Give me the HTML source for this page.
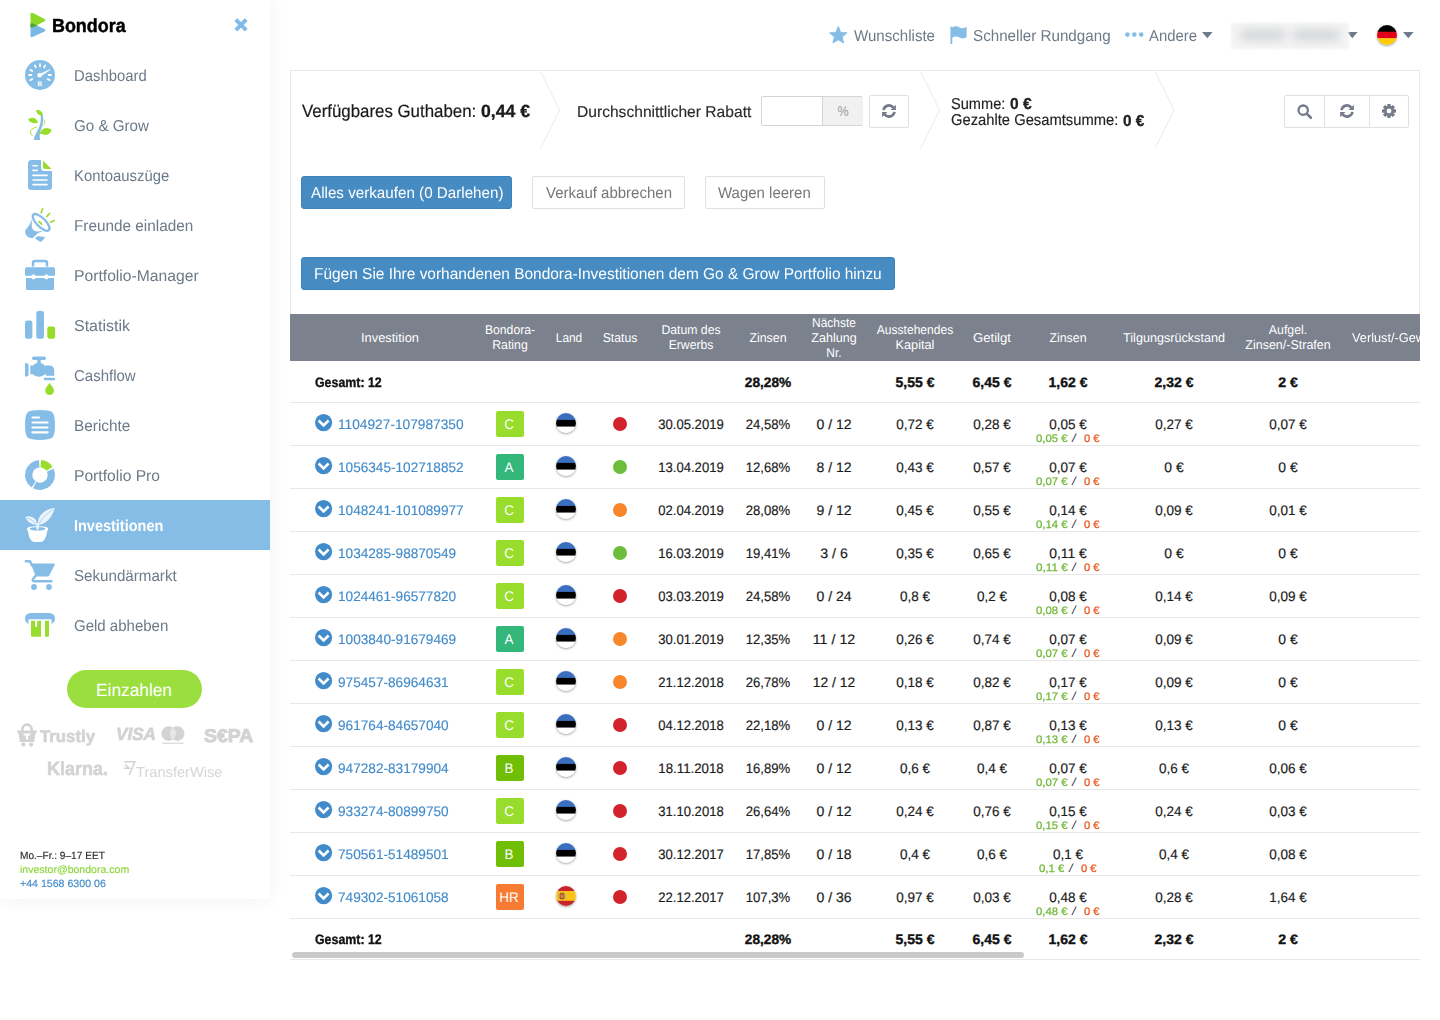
<!DOCTYPE html>
<html lang="de"><head><meta charset="utf-8"><title>Bondora – Investitionen</title>
<style>
html,body{margin:0;padding:0;background:#fff}
body{width:1440px;height:1020px;position:relative;overflow:hidden;font-family:"Liberation Sans",sans-serif;text-rendering:geometricPrecision}
.a{position:absolute;display:block}
.t{position:absolute;white-space:pre;display:block}
svg{overflow:visible}
</style></head>
<body>
<div class="a" style="left:0;top:0;width:270px;height:899px;background:#fff;box-shadow:0 0 18px rgba(0,0,0,0.06)"></div>
<div class="a" style="left:0;top:500px;width:270px;height:50px;background:#85bde7"></div>
<svg class="a" style="left:29.5px;top:12px;" width="17" height="26" viewBox="0 0 17 26"><path d="M1.8 2 V14.3 L14 8.1 Z" fill="#8bd827" stroke="#8bd827" stroke-width="2.6" stroke-linejoin="round"/><path d="M1.8 12.6 V23.9 L14 18.2 Z" fill="#7ab8e6" stroke="#7ab8e6" stroke-width="2.6" stroke-linejoin="round"/><path d="M0.5 12.6 Q0.7 11.1 2.4 11.4 L7.6 13.6 L2.6 15.5 Q0.5 16.2 0.5 14.3 Z" fill="#4ea830"/></svg>
<svg class="a" style="left:234px;top:18px;" width="14" height="14" viewBox="0 0 14 14"><path d="M1.8 1.7 L12.2 12.1 M12.2 1.7 L1.8 12.1" stroke="#7ebaea" stroke-width="3.8"/></svg>
<svg class="a" style="left:25px;top:60px;" width="30" height="30" viewBox="0 0 30 30"><circle cx="15" cy="15" r="15" fill="#85bde7"/><line x1="7.32" y1="19.08" x2="5.38" y2="20.12" stroke="#fff" stroke-width="1.8" stroke-linecap="round"/><line x1="6.30" y1="15.00" x2="4.10" y2="15.00" stroke="#fff" stroke-width="1.8" stroke-linecap="round"/><line x1="7.32" y1="10.92" x2="5.38" y2="9.88" stroke="#fff" stroke-width="1.8" stroke-linecap="round"/><line x1="10.92" y1="7.32" x2="9.88" y2="5.38" stroke="#fff" stroke-width="1.8" stroke-linecap="round"/><line x1="15.00" y1="6.30" x2="15.00" y2="4.10" stroke="#fff" stroke-width="1.8" stroke-linecap="round"/><line x1="19.08" y1="7.32" x2="20.12" y2="5.38" stroke="#fff" stroke-width="1.8" stroke-linecap="round"/><line x1="23.70" y1="15.00" x2="25.90" y2="15.00" stroke="#fff" stroke-width="1.8" stroke-linecap="round"/><line x1="22.68" y1="19.08" x2="24.62" y2="20.12" stroke="#fff" stroke-width="1.8" stroke-linecap="round"/><circle cx="14.6" cy="15.2" r="2.2" fill="#fff"/><path d="M14.2 14.2 L24.8 9.2 L25.2 10 L15.4 16.4 Z" fill="#fff"/><text x="14.8" y="26.2" font-size="6.5" font-weight="700" fill="#fff" text-anchor="middle" font-family="Liberation Sans">B</text></svg>
<svg class="a" style="left:25px;top:109.8px;" width="30" height="30" viewBox="0 0 30 30"><path d="M8.8 30 C9.6 24 14 20 15.4 13 C16 10 16 7 15.4 4.2 L17.4 3.6 C18.6 8 18.4 12 17.2 16 C15.6 21 14 24 15.2 30 Z" fill="#85bde7"/><path d="M11 0.2 C14.5 -0.3 17.5 1.5 17.8 5 C14.5 6 11.8 4 11 0.2 Z" fill="#98dd2c"/><path d="M3 9.5 C7 6.5 11.5 7.5 13 12.8 C9 14 5.5 13 3 9.5 Z" fill="#98dd2c"/><path d="M26.8 20 C23 16.5 17.5 17.5 15.5 22 L13.5 24 C17 23 19 25.5 22 24.8 C24.5 24 26 22 26.8 20 Z" fill="#98dd2c"/><path d="M7.5 26 C3.5 22 6 18.5 11.5 17" fill="none" stroke="#98dd2c" stroke-width="0.9"/><path d="M18.5 9.5 C21 11.5 20 14 17.5 15.5" fill="none" stroke="#98dd2c" stroke-width="0.9"/></svg>
<svg class="a" style="left:28px;top:159.8px;" width="24" height="30" viewBox="0 0 24 30"><path d="M3.5 0 H13 V7.5 Q13 11 16.5 11 H24 V26.5 Q24 30 20.5 30 H3.5 Q0 30 0 26.5 V3.5 Q0 0 3.5 0 Z" fill="#85bde7"/><path d="M15 0.8 L23.5 9 H17.5 Q15 9 15 6.5 Z" fill="#98dd2c"/><g stroke="#fff" stroke-width="1.6" stroke-linecap="round"><line x1="5" y1="5.8" x2="9.3" y2="5.8"/><line x1="5" y1="10.4" x2="9.3" y2="10.4"/><line x1="5" y1="15.4" x2="19" y2="15.4"/><line x1="5" y1="20" x2="19" y2="20"/><line x1="5" y1="24.6" x2="19" y2="24.6"/></g></svg>
<svg class="a" style="left:20px;top:203px;" width="40" height="44" viewBox="0 0 40 44"><ellipse cx="21.1" cy="19.4" rx="11" ry="4.4" transform="rotate(45 21.1 19.4)" fill="none" stroke="#85bde7" stroke-width="2.3"/><path d="M11.6 15.5 C11 20 9 23 5.4 27 C4.6 28.5 5.4 31.5 7 33 C9 34.8 11.5 35.6 13 34.8 C15 33.5 16.5 31 18.5 29.8 C20 29 21.5 28.6 23 28.2 C19.5 28.2 16.8 28.8 14.8 28 C12.5 27 11.5 24.5 11.8 21.5 Z" fill="#85bde7"/><path d="M15 35.4 L17.8 33 C20 33.8 22.5 33.4 25 34 C24.4 36 22.6 38 20.4 38.9 Z" fill="#85bde7"/><path d="M19 18.6 Q21 19.2 21.6 21.2" fill="none" stroke="#98dd2c" stroke-width="1.7" stroke-linecap="round"/><g stroke="#98dd2c" stroke-width="1.7" stroke-linecap="round"><line x1="22.6" y1="5.8" x2="21.2" y2="9.8"/><line x1="29.6" y1="10.5" x2="26.8" y2="13.4"/><line x1="34.3" y1="17.5" x2="30.6" y2="19.2"/></g></svg>
<svg class="a" style="left:25px;top:259.8px;" width="30" height="30" viewBox="0 0 30 30"><path d="M8 6.5 V3 Q8 1 10 1 H20 Q22 1 22 3 V6.5" fill="none" stroke="#85bde7" stroke-width="2.5"/><path d="M1.5 7.3 H28.5 Q30 7.3 30 8.8 V15.8 H0 V8.8 Q0 7.3 1.5 7.3 Z" fill="#85bde7"/><path d="M1 18 H29 V28.7 Q29 30 27.7 30 H2.3 Q1 30 1 28.7 Z" fill="#85bde7"/><rect x="6.8" y="14.6" width="3.3" height="4.6" fill="#fff"/><rect x="19.8" y="14.6" width="3.3" height="4.6" fill="#fff"/></svg>
<svg class="a" style="left:25px;top:311px;" width="30.2" height="28" viewBox="0 0 30.2 28"><rect x="0" y="9.6" width="7.4" height="18.2" rx="2.2" fill="#85bde7"/><rect x="11.3" y="0" width="7.7" height="27.8" rx="2.2" fill="#85bde7"/><rect x="22.3" y="15.5" width="7.8" height="12.3" rx="2.2" fill="#98dd2c"/></svg>
<svg class="a" style="left:25px;top:355.5px;" width="30.2" height="40" viewBox="0 0 30.2 40"><rect x="7" y="0.6" width="14" height="3.4" rx="1.7" fill="#85bde7"/><rect x="12.3" y="2" width="3.4" height="6" fill="#85bde7"/><path d="M0 7.3 H1.8 Q3.6 7.3 3.6 9 V18.6 Q3.6 20.4 1.8 20.4 H0 Z" fill="#85bde7"/><path d="M5.3 9.5 H8 C10 6.2 17.5 6.2 19.5 9.5 H24 Q29.3 9.5 29.3 15 V19.8 H21 V18.3 H20 C17 21.5 10.5 21.5 8 18.3 H5.3 Z" fill="#85bde7"/><rect x="19" y="21.7" width="11" height="2.6" rx="0.6" fill="#85bde7"/><path d="M24.6 27 C27 30.5 29 32.5 29 34.6 A4.4 4.4 0 0 1 20.2 34.6 C20.2 32.5 22.2 30.5 24.6 27 Z" fill="#98dd2c"/></svg>
<svg class="a" style="left:25px;top:410px;" width="30" height="30" viewBox="0 0 30 30"><path d="M15 0 C21 0 25.5 0.8 27.6 2.4 C29.2 4.5 30 9 30 15 C30 21 29.2 25.5 27.6 27.6 C25.5 29.2 21 30 15 30 C9 30 4.5 29.2 2.4 27.6 C0.8 25.5 0 21 0 15 C0 9 0.8 4.5 2.4 2.4 C4.5 0.8 9 0 15 0 Z" fill="#85bde7"/><g stroke="#fff" stroke-width="2.2" stroke-linecap="round"><line x1="7.5" y1="7.5" x2="14" y2="7.5"/><line x1="7.5" y1="12.5" x2="22.5" y2="12.5"/><line x1="7.5" y1="17.5" x2="22.5" y2="17.5"/><line x1="7.5" y1="22.4" x2="22.5" y2="22.4"/></g></svg>
<svg class="a" style="left:25px;top:460px;" width="30" height="30" viewBox="0 0 30 30"><path d="M16.05 0.04 A15 15 0 0 1 27.58 6.83 L21.37 10.86 A7.6 7.6 0 0 0 15.53 7.42 Z" fill="#98dd2c"/><path d="M28.48 8.42 A15 15 0 0 1 7.96 28.24 L11.43 21.71 A7.6 7.6 0 0 0 21.83 11.67 Z" fill="#85bde7"/><path d="M6.61 27.44 A15 15 0 0 1 13.95 0.04 L14.47 7.42 A7.6 7.6 0 0 0 10.75 21.30 Z" fill="#85bde7"/></svg>
<svg class="a" style="left:25px;top:507.7px;" width="30" height="34" viewBox="0 0 30 34"><path d="M2 20.5 C2 17.6 23.1 17.6 23.1 20.5 C23.1 22 22.6 22.8 22 23.6 C21.4 29 19.8 32.2 17.6 33.4 C16 34.1 9.2 34.1 7.6 33.4 C5.3 32.2 3.7 29 3.1 23.6 C2.5 22.8 2 22 2 20.5 Z" fill="#fff"/><ellipse cx="12.55" cy="20.7" rx="7.8" ry="1.7" fill="#85bde7"/><path d="M11.3 21.6 L11.5 15 L13.8 15 L13.7 21.6 Z" fill="#fff" fill-opacity="0.85"/><path d="M29.8 0.1 C23 0.6 17 4 14 10 C13 12 12.8 15 13.4 17 C18 16.4 22 14 25 10 C27.5 7 29 3.5 29.8 0.1 Z" fill="#fff" fill-opacity="0.82"/><path d="M0.3 9 C4 7.4 8.5 8.6 10.6 11.8 C11.6 13.4 12 15 11.8 16.6 C7.5 17 2.5 14.5 0.3 9 Z" fill="#fff" fill-opacity="0.82"/><path d="M28.4 1.4 C22 5.5 17 10 13.8 16" stroke="#85bde7" stroke-width="0.7" fill="none" opacity="0.8"/><path d="M2 10 C6 11.2 9 13.2 11.2 16" stroke="#85bde7" stroke-width="0.7" fill="none" opacity="0.8"/></svg>
<svg class="a" style="left:25px;top:560px;" width="30.4" height="30" viewBox="0 0 30.4 30"><path d="M0.8 1.2 H5 L7 5.5" fill="none" stroke="#85bde7" stroke-width="2.4" stroke-linecap="round" stroke-linejoin="round"/><path d="M5.8 3.6 H28.6 Q30.4 3.6 29.6 5.2 L24.2 15.4 Q23.6 16.4 22.4 16.4 H10.8 Z" fill="#85bde7"/><path d="M10.4 16 L8 19 Q7 21.3 9.4 21.3 H26.4" fill="none" stroke="#85bde7" stroke-width="2.4" stroke-linecap="round" stroke-linejoin="round"/><circle cx="9" cy="27" r="2.9" fill="#85bde7"/><circle cx="24" cy="27" r="2.9" fill="#85bde7"/></svg>
<svg class="a" style="left:25px;top:613.2px;" width="30" height="24" viewBox="0 0 30 24"><path d="M5.5 0 H24.5 A5.5 5.5 0 0 1 30 5.5 C30 8 28.6 10 26.6 11 V7.2 Q26.6 6.2 25.6 6.2 H4.4 Q3.4 6.2 3.4 7.2 V11 C1.4 10 0 8 0 5.5 A5.5 5.5 0 0 1 5.5 0 Z" fill="#85bde7"/><path d="M6 7.8 H10 V13.8 H12.2 V7.8 H16 V23.8 H7.2 Q6 23.8 6 22.6 Z" fill="#98dd2c"/><path d="M20 7.8 H24 V22.6 Q24 23.8 22.8 23.8 H20 Z" fill="#98dd2c"/></svg>
<div class="a" style="left:67px;top:670px;width:135px;height:38px;border-radius:19px;background:#9bdf3e"></div>
<svg class="a" style="left:17px;top:723px;" width="20" height="24" viewBox="0 0 20 24"><path d="M5.4 9 V6.2 A4.6 4.6 0 0 1 14.6 6.2 V9" fill="none" stroke="#d3d3d3" stroke-width="2.6"/><path d="M0 7.6 H20 V9 L18.4 10.4 L17.2 19 H2.8 L1.6 10.4 L0 9 Z" fill="#d3d3d3"/><path d="M6.6 10.6 H13.4 V12.6 H11.1 V16.6 H8.9 V12.6 H6.6 Z" fill="#fff"/><circle cx="6.3" cy="21.6" r="2.1" fill="#d3d3d3"/><circle cx="14.2" cy="21.6" r="2.1" fill="#d3d3d3"/></svg>
<svg class="a" style="left:160.5px;top:725.5px;" width="24" height="19" viewBox="0 0 24 19"><circle cx="7.6" cy="7.6" r="7.3" fill="#d3d3d3"/><circle cx="16.2" cy="7.6" r="7.3" fill="#d3d3d3"/><path d="M11.9 1.7 A7.3 7.3 0 0 1 11.9 13.5 A7.3 7.3 0 0 1 11.9 1.7 Z" fill="#e6e6e6"/><rect x="1" y="16.6" width="21.5" height="1.3" fill="#d3d3d3" opacity="0.8"/></svg>
<svg class="a" style="left:122.5px;top:760.5px;" width="13" height="15" viewBox="0 0 13 15"><path d="M1.2 0.8 H11.8 L6.2 14 M0.6 7.2 H6.2 L2.2 3.6" fill="none" stroke="#d3d3d3" stroke-width="1.5"/></svg>
<svg class="a" style="left:828.6px;top:26.3px;" width="19" height="18" viewBox="0 0 19 18"><polygon points="9.30,0.70 11.59,6.44 17.76,6.85 13.01,10.81 14.53,16.80 9.30,13.50 4.07,16.80 5.59,10.81 0.84,6.85 7.01,6.44" fill="#85bde7" stroke="#85bde7" stroke-width="1.1" stroke-linejoin="round"/></svg>
<svg class="a" style="left:949.5px;top:26px;" width="18" height="19" viewBox="0 0 18 19"><rect x="0.4" y="0.4" width="1.9" height="17.8" rx="0.9" fill="#85bde7"/><path d="M2 1.6 C5 -0.2 7.5 0.2 9.5 1.4 C11.5 2.6 14 2.6 16.6 0.8 V11 C14 12.8 11.5 12.8 9.5 11.6 C7.5 10.4 5 10 2 11.8 Z" fill="#85bde7"/></svg>
<svg class="a" style="left:1124.6px;top:32.4px;" width="19" height="5.2" viewBox="0 0 19 5.2"><circle cx="2.4" cy="2.6" r="2.3" fill="#85bde7"/><circle cx="9.3" cy="2.6" r="2.3" fill="#85bde7"/><circle cx="16.2" cy="2.6" r="2.3" fill="#85bde7"/></svg>
<svg class="a" style="left:1202.2px;top:32.2px;" width="10.6" height="6.2" viewBox="0 0 10.6 6.2"><path d="M0 0 H10.6 L5.3 6.2 Z" fill="#6c7a89"/></svg>
<svg class="a" style="left:1347.2px;top:32.2px;" width="10.6" height="6.2" viewBox="0 0 10.6 6.2"><path d="M0 0 H10.6 L5.3 6.2 Z" fill="#6c7a89"/></svg>
<div class="a" style="left:1231px;top:22.5px;width:118px;height:26px;background:#f4f4f4;filter:blur(1.2px)"></div>
<div class="a" style="left:1240px;top:29px;width:46px;height:12px;border-radius:6px;background:#d6d9dc;filter:blur(4px)"></div>
<div class="a" style="left:1292px;top:29px;width:48px;height:12px;border-radius:6px;background:#d6d9dc;filter:blur(4px)"></div>
<div class="a" style="left:1377px;top:25px;width:20px;height:20px;border-radius:10px;background:#fff;box-shadow:0 1px 2.5px rgba(0,0,0,0.38)"></div>
<svg class="a" style="left:1376px;top:24px;" width="22" height="24" viewBox="0 0 22 24"><defs><clipPath id="gc"><circle cx="11" cy="11" r="10"/></clipPath></defs><g clip-path="url(#gc)"><rect x="0" y="0" width="22" height="8" fill="#000"/><rect x="0" y="7.7" width="22" height="6.8" fill="#e1001a"/><rect x="0" y="14.3" width="22" height="8" fill="#fc0"/></g></svg>
<svg class="a" style="left:1402.8px;top:32.2px;" width="10.6" height="6.2" viewBox="0 0 10.6 6.2"><path d="M0 0 H10.6 L5.3 6.2 Z" fill="#6c7a89"/></svg>
<div class="a" style="left:290px;top:70px;width:1130px;height:1px;background:#e8e8e8"></div>
<div class="a" style="left:290px;top:70px;width:1px;height:244px;background:#e9e9e9"></div>
<div class="a" style="left:1419px;top:70px;width:1px;height:244px;background:#e9e9e9"></div>
<svg class="a" style="left:290px;top:71px;" width="1000" height="78" viewBox="0 0 1000 78"><polyline points="250.5,0.5 269.5,39 250.5,77.5" fill="none" stroke="#eeeeee" stroke-width="1.1"/><polyline points="630.5,0.5 649.5,39 630.5,77.5" fill="none" stroke="#eeeeee" stroke-width="1.1"/><polyline points="865,0.5 884,39 865,77.5" fill="none" stroke="#eeeeee" stroke-width="1.1"/></svg>
<div class="a" style="left:761px;top:96px;width:102px;height:30px;box-sizing:border-box;border:1px solid #d4d4d4;border-radius:2px;background:#fff"></div>
<div class="a" style="left:822px;top:97px;width:40px;height:28px;background:#f1f1f1;border-left:1px solid #d4d4d4;border-radius:0 1px 1px 0"></div>
<div class="a" style="left:869px;top:95px;width:40px;height:33px;box-sizing:border-box;border:1px solid #e1e1e1;border-radius:2px;background:#fff"></div>
<svg class="a" style="left:882px;top:104.2px;" width="14" height="14" viewBox="0 0 14 14"><path d="M1.5 6.1 A5.5 5.5 0 0 1 11.3 3.6" fill="none" stroke="#757a8a" stroke-width="2.6"/><path d="M13.9 0.8 V6.1 H8.6 Z" fill="#757a8a"/><path d="M12.5 7.9 A5.5 5.5 0 0 1 2.7 10.4" fill="none" stroke="#757a8a" stroke-width="2.6"/><path d="M0.1 13.2 V7.9 H5.4 Z" fill="#757a8a"/></svg>
<div class="a" style="left:1284px;top:95px;width:125px;height:33px;box-sizing:border-box;border:1px solid #e1e1e1;border-radius:2px;background:#fff"></div>
<div class="a" style="left:1324px;top:95px;width:1px;height:33px;background:#e1e1e1"></div>
<div class="a" style="left:1369px;top:95px;width:1px;height:33px;background:#e1e1e1"></div>
<svg class="a" style="left:1296.5px;top:104px;" width="16" height="16" viewBox="0 0 16 16"><circle cx="6.2" cy="6.2" r="4.7" fill="none" stroke="#757a8a" stroke-width="2.3"/><line x1="9.9" y1="9.9" x2="13.9" y2="13.8" stroke="#757a8a" stroke-width="2.6" stroke-linecap="round"/></svg>
<svg class="a" style="left:1340.2px;top:104.2px;" width="14" height="14" viewBox="0 0 14 14"><path d="M1.5 6.1 A5.5 5.5 0 0 1 11.3 3.6" fill="none" stroke="#757a8a" stroke-width="2.6"/><path d="M13.9 0.8 V6.1 H8.6 Z" fill="#757a8a"/><path d="M12.5 7.9 A5.5 5.5 0 0 1 2.7 10.4" fill="none" stroke="#757a8a" stroke-width="2.6"/><path d="M0.1 13.2 V7.9 H5.4 Z" fill="#757a8a"/></svg>
<svg class="a" style="left:1382px;top:104px;" width="14" height="14" viewBox="0 0 14 14"><rect x="5.3" y="0" width="3.4" height="3.4" rx="0.4" fill="#757a8a" transform="rotate(0 7 7)"/><rect x="5.3" y="0" width="3.4" height="3.4" rx="0.4" fill="#757a8a" transform="rotate(45 7 7)"/><rect x="5.3" y="0" width="3.4" height="3.4" rx="0.4" fill="#757a8a" transform="rotate(90 7 7)"/><rect x="5.3" y="0" width="3.4" height="3.4" rx="0.4" fill="#757a8a" transform="rotate(135 7 7)"/><rect x="5.3" y="0" width="3.4" height="3.4" rx="0.4" fill="#757a8a" transform="rotate(180 7 7)"/><rect x="5.3" y="0" width="3.4" height="3.4" rx="0.4" fill="#757a8a" transform="rotate(225 7 7)"/><rect x="5.3" y="0" width="3.4" height="3.4" rx="0.4" fill="#757a8a" transform="rotate(270 7 7)"/><rect x="5.3" y="0" width="3.4" height="3.4" rx="0.4" fill="#757a8a" transform="rotate(315 7 7)"/><circle cx="7" cy="7" r="5" fill="#757a8a"/><circle cx="7" cy="7" r="2.45" fill="#fff"/></svg>
<div class="a" style="left:301px;top:176px;width:211px;height:33px;box-sizing:border-box;border:1px solid #3d83bb;border-radius:3px;background:#468cc2"></div>
<div class="a" style="left:532px;top:176px;width:153px;height:33px;box-sizing:border-box;border:1px solid #e1e1e1;border-radius:2px;background:#fff"></div>
<div class="a" style="left:705px;top:176px;width:120px;height:33px;box-sizing:border-box;border:1px solid #e1e1e1;border-radius:2px;background:#fff"></div>
<div class="a" style="left:301px;top:257px;width:594px;height:33px;box-sizing:border-box;border:1px solid #3d83bb;border-radius:3px;background:#468cc2"></div>
<div class="a" style="left:290px;top:314px;width:1130px;height:47px;background:#7b818d"></div>
<div class="a" style="left:1340px;top:314px;width:80px;height:47px;overflow:hidden" ><span class="t" style="top:15px;font-size:12.8px;line-height:17px;color:#fff;left:11.5px;transform-origin:0 50%;transform:scaleX(0.9964);">Verlust/-Gewinn</span></div>
<div class="a" style="left:290px;top:402px;width:1130px;height:1px;background:#e8e8e8"></div>
<div class="a" style="left:290px;top:445px;width:1130px;height:1px;background:#e8e8e8"></div>
<div class="a" style="left:290px;top:488px;width:1130px;height:1px;background:#e8e8e8"></div>
<div class="a" style="left:290px;top:531px;width:1130px;height:1px;background:#e8e8e8"></div>
<div class="a" style="left:290px;top:574px;width:1130px;height:1px;background:#e8e8e8"></div>
<div class="a" style="left:290px;top:617px;width:1130px;height:1px;background:#e8e8e8"></div>
<div class="a" style="left:290px;top:660px;width:1130px;height:1px;background:#e8e8e8"></div>
<div class="a" style="left:290px;top:703px;width:1130px;height:1px;background:#e8e8e8"></div>
<div class="a" style="left:290px;top:746px;width:1130px;height:1px;background:#e8e8e8"></div>
<div class="a" style="left:290px;top:789px;width:1130px;height:1px;background:#e8e8e8"></div>
<div class="a" style="left:290px;top:832px;width:1130px;height:1px;background:#e8e8e8"></div>
<div class="a" style="left:290px;top:875px;width:1130px;height:1px;background:#e8e8e8"></div>
<div class="a" style="left:290px;top:918px;width:1130px;height:1px;background:#e8e8e8"></div>
<div class="a" style="left:290px;top:959px;width:1130px;height:1px;background:#e8e8e8"></div>
<div class="a" style="left:292px;top:952px;width:732px;height:6px;border-radius:3px;background:#c9c9c9"></div>
<svg class="a" style="left:315px;top:414px;" width="17.4" height="17.4" viewBox="0 0 17.4 17.4"><circle cx="8.6" cy="8.6" r="8.6" fill="#428bca"/><path d="M3.6 6.5 L8.6 11.4 L13.6 6.5" fill="none" stroke="#fff" stroke-width="2.6"/></svg>
<div class="a" style="left:496px;top:411px;width:28px;height:26px;border-radius:2px;background:#98dd2c"></div>
<div class="a" style="left:556px;top:413.4px;width:20px;height:20px;border-radius:10px;background:#fff;box-shadow:0 1px 2.5px rgba(0,0,0,0.38)"></div><svg class="a" style="left:554px;top:412.4px;" width="24" height="25" viewBox="0 0 24 25"><defs><clipPath id="f0"><circle cx="12" cy="11" r="10"/></clipPath></defs><g clip-path="url(#f0)"><rect x="0" y="0" width="24" height="8" fill="#3a6fbf"/><rect x="0" y="7.9" width="24" height="6.9" fill="#000"/><rect x="0" y="14.7" width="24" height="9" fill="#fff"/></g></svg>
<div class="a" style="left:613px;top:417px;width:14px;height:14px;border-radius:7px;background:#d2232a"></div>
<svg class="a" style="left:315px;top:457px;" width="17.4" height="17.4" viewBox="0 0 17.4 17.4"><circle cx="8.6" cy="8.6" r="8.6" fill="#428bca"/><path d="M3.6 6.5 L8.6 11.4 L13.6 6.5" fill="none" stroke="#fff" stroke-width="2.6"/></svg>
<div class="a" style="left:496px;top:454px;width:28px;height:26px;border-radius:2px;background:#33b77a"></div>
<div class="a" style="left:556px;top:456.4px;width:20px;height:20px;border-radius:10px;background:#fff;box-shadow:0 1px 2.5px rgba(0,0,0,0.38)"></div><svg class="a" style="left:554px;top:455.4px;" width="24" height="25" viewBox="0 0 24 25"><defs><clipPath id="f1"><circle cx="12" cy="11" r="10"/></clipPath></defs><g clip-path="url(#f1)"><rect x="0" y="0" width="24" height="8" fill="#3a6fbf"/><rect x="0" y="7.9" width="24" height="6.9" fill="#000"/><rect x="0" y="14.7" width="24" height="9" fill="#fff"/></g></svg>
<div class="a" style="left:613px;top:460px;width:14px;height:14px;border-radius:7px;background:#6dbd3c"></div>
<svg class="a" style="left:315px;top:500px;" width="17.4" height="17.4" viewBox="0 0 17.4 17.4"><circle cx="8.6" cy="8.6" r="8.6" fill="#428bca"/><path d="M3.6 6.5 L8.6 11.4 L13.6 6.5" fill="none" stroke="#fff" stroke-width="2.6"/></svg>
<div class="a" style="left:496px;top:497px;width:28px;height:26px;border-radius:2px;background:#98dd2c"></div>
<div class="a" style="left:556px;top:499.4px;width:20px;height:20px;border-radius:10px;background:#fff;box-shadow:0 1px 2.5px rgba(0,0,0,0.38)"></div><svg class="a" style="left:554px;top:498.4px;" width="24" height="25" viewBox="0 0 24 25"><defs><clipPath id="f2"><circle cx="12" cy="11" r="10"/></clipPath></defs><g clip-path="url(#f2)"><rect x="0" y="0" width="24" height="8" fill="#3a6fbf"/><rect x="0" y="7.9" width="24" height="6.9" fill="#000"/><rect x="0" y="14.7" width="24" height="9" fill="#fff"/></g></svg>
<div class="a" style="left:613px;top:503px;width:14px;height:14px;border-radius:7px;background:#f7872a"></div>
<svg class="a" style="left:315px;top:543px;" width="17.4" height="17.4" viewBox="0 0 17.4 17.4"><circle cx="8.6" cy="8.6" r="8.6" fill="#428bca"/><path d="M3.6 6.5 L8.6 11.4 L13.6 6.5" fill="none" stroke="#fff" stroke-width="2.6"/></svg>
<div class="a" style="left:496px;top:540px;width:28px;height:26px;border-radius:2px;background:#98dd2c"></div>
<div class="a" style="left:556px;top:542.4px;width:20px;height:20px;border-radius:10px;background:#fff;box-shadow:0 1px 2.5px rgba(0,0,0,0.38)"></div><svg class="a" style="left:554px;top:541.4px;" width="24" height="25" viewBox="0 0 24 25"><defs><clipPath id="f3"><circle cx="12" cy="11" r="10"/></clipPath></defs><g clip-path="url(#f3)"><rect x="0" y="0" width="24" height="8" fill="#3a6fbf"/><rect x="0" y="7.9" width="24" height="6.9" fill="#000"/><rect x="0" y="14.7" width="24" height="9" fill="#fff"/></g></svg>
<div class="a" style="left:613px;top:546px;width:14px;height:14px;border-radius:7px;background:#6dbd3c"></div>
<svg class="a" style="left:315px;top:586px;" width="17.4" height="17.4" viewBox="0 0 17.4 17.4"><circle cx="8.6" cy="8.6" r="8.6" fill="#428bca"/><path d="M3.6 6.5 L8.6 11.4 L13.6 6.5" fill="none" stroke="#fff" stroke-width="2.6"/></svg>
<div class="a" style="left:496px;top:583px;width:28px;height:26px;border-radius:2px;background:#98dd2c"></div>
<div class="a" style="left:556px;top:585.4px;width:20px;height:20px;border-radius:10px;background:#fff;box-shadow:0 1px 2.5px rgba(0,0,0,0.38)"></div><svg class="a" style="left:554px;top:584.4px;" width="24" height="25" viewBox="0 0 24 25"><defs><clipPath id="f4"><circle cx="12" cy="11" r="10"/></clipPath></defs><g clip-path="url(#f4)"><rect x="0" y="0" width="24" height="8" fill="#3a6fbf"/><rect x="0" y="7.9" width="24" height="6.9" fill="#000"/><rect x="0" y="14.7" width="24" height="9" fill="#fff"/></g></svg>
<div class="a" style="left:613px;top:589px;width:14px;height:14px;border-radius:7px;background:#d2232a"></div>
<svg class="a" style="left:315px;top:629px;" width="17.4" height="17.4" viewBox="0 0 17.4 17.4"><circle cx="8.6" cy="8.6" r="8.6" fill="#428bca"/><path d="M3.6 6.5 L8.6 11.4 L13.6 6.5" fill="none" stroke="#fff" stroke-width="2.6"/></svg>
<div class="a" style="left:496px;top:626px;width:28px;height:26px;border-radius:2px;background:#33b77a"></div>
<div class="a" style="left:556px;top:628.4px;width:20px;height:20px;border-radius:10px;background:#fff;box-shadow:0 1px 2.5px rgba(0,0,0,0.38)"></div><svg class="a" style="left:554px;top:627.4px;" width="24" height="25" viewBox="0 0 24 25"><defs><clipPath id="f5"><circle cx="12" cy="11" r="10"/></clipPath></defs><g clip-path="url(#f5)"><rect x="0" y="0" width="24" height="8" fill="#3a6fbf"/><rect x="0" y="7.9" width="24" height="6.9" fill="#000"/><rect x="0" y="14.7" width="24" height="9" fill="#fff"/></g></svg>
<div class="a" style="left:613px;top:632px;width:14px;height:14px;border-radius:7px;background:#f7872a"></div>
<svg class="a" style="left:315px;top:672px;" width="17.4" height="17.4" viewBox="0 0 17.4 17.4"><circle cx="8.6" cy="8.6" r="8.6" fill="#428bca"/><path d="M3.6 6.5 L8.6 11.4 L13.6 6.5" fill="none" stroke="#fff" stroke-width="2.6"/></svg>
<div class="a" style="left:496px;top:669px;width:28px;height:26px;border-radius:2px;background:#98dd2c"></div>
<div class="a" style="left:556px;top:671.4px;width:20px;height:20px;border-radius:10px;background:#fff;box-shadow:0 1px 2.5px rgba(0,0,0,0.38)"></div><svg class="a" style="left:554px;top:670.4px;" width="24" height="25" viewBox="0 0 24 25"><defs><clipPath id="f6"><circle cx="12" cy="11" r="10"/></clipPath></defs><g clip-path="url(#f6)"><rect x="0" y="0" width="24" height="8" fill="#3a6fbf"/><rect x="0" y="7.9" width="24" height="6.9" fill="#000"/><rect x="0" y="14.7" width="24" height="9" fill="#fff"/></g></svg>
<div class="a" style="left:613px;top:675px;width:14px;height:14px;border-radius:7px;background:#f7872a"></div>
<svg class="a" style="left:315px;top:715px;" width="17.4" height="17.4" viewBox="0 0 17.4 17.4"><circle cx="8.6" cy="8.6" r="8.6" fill="#428bca"/><path d="M3.6 6.5 L8.6 11.4 L13.6 6.5" fill="none" stroke="#fff" stroke-width="2.6"/></svg>
<div class="a" style="left:496px;top:712px;width:28px;height:26px;border-radius:2px;background:#98dd2c"></div>
<div class="a" style="left:556px;top:714.4px;width:20px;height:20px;border-radius:10px;background:#fff;box-shadow:0 1px 2.5px rgba(0,0,0,0.38)"></div><svg class="a" style="left:554px;top:713.4px;" width="24" height="25" viewBox="0 0 24 25"><defs><clipPath id="f7"><circle cx="12" cy="11" r="10"/></clipPath></defs><g clip-path="url(#f7)"><rect x="0" y="0" width="24" height="8" fill="#3a6fbf"/><rect x="0" y="7.9" width="24" height="6.9" fill="#000"/><rect x="0" y="14.7" width="24" height="9" fill="#fff"/></g></svg>
<div class="a" style="left:613px;top:718px;width:14px;height:14px;border-radius:7px;background:#d2232a"></div>
<svg class="a" style="left:315px;top:758px;" width="17.4" height="17.4" viewBox="0 0 17.4 17.4"><circle cx="8.6" cy="8.6" r="8.6" fill="#428bca"/><path d="M3.6 6.5 L8.6 11.4 L13.6 6.5" fill="none" stroke="#fff" stroke-width="2.6"/></svg>
<div class="a" style="left:496px;top:755px;width:28px;height:26px;border-radius:2px;background:#70be06"></div>
<div class="a" style="left:556px;top:757.4px;width:20px;height:20px;border-radius:10px;background:#fff;box-shadow:0 1px 2.5px rgba(0,0,0,0.38)"></div><svg class="a" style="left:554px;top:756.4px;" width="24" height="25" viewBox="0 0 24 25"><defs><clipPath id="f8"><circle cx="12" cy="11" r="10"/></clipPath></defs><g clip-path="url(#f8)"><rect x="0" y="0" width="24" height="8" fill="#3a6fbf"/><rect x="0" y="7.9" width="24" height="6.9" fill="#000"/><rect x="0" y="14.7" width="24" height="9" fill="#fff"/></g></svg>
<div class="a" style="left:613px;top:761px;width:14px;height:14px;border-radius:7px;background:#d2232a"></div>
<svg class="a" style="left:315px;top:801px;" width="17.4" height="17.4" viewBox="0 0 17.4 17.4"><circle cx="8.6" cy="8.6" r="8.6" fill="#428bca"/><path d="M3.6 6.5 L8.6 11.4 L13.6 6.5" fill="none" stroke="#fff" stroke-width="2.6"/></svg>
<div class="a" style="left:496px;top:798px;width:28px;height:26px;border-radius:2px;background:#98dd2c"></div>
<div class="a" style="left:556px;top:800.4px;width:20px;height:20px;border-radius:10px;background:#fff;box-shadow:0 1px 2.5px rgba(0,0,0,0.38)"></div><svg class="a" style="left:554px;top:799.4px;" width="24" height="25" viewBox="0 0 24 25"><defs><clipPath id="f9"><circle cx="12" cy="11" r="10"/></clipPath></defs><g clip-path="url(#f9)"><rect x="0" y="0" width="24" height="8" fill="#3a6fbf"/><rect x="0" y="7.9" width="24" height="6.9" fill="#000"/><rect x="0" y="14.7" width="24" height="9" fill="#fff"/></g></svg>
<div class="a" style="left:613px;top:804px;width:14px;height:14px;border-radius:7px;background:#d2232a"></div>
<svg class="a" style="left:315px;top:844px;" width="17.4" height="17.4" viewBox="0 0 17.4 17.4"><circle cx="8.6" cy="8.6" r="8.6" fill="#428bca"/><path d="M3.6 6.5 L8.6 11.4 L13.6 6.5" fill="none" stroke="#fff" stroke-width="2.6"/></svg>
<div class="a" style="left:496px;top:841px;width:28px;height:26px;border-radius:2px;background:#70be06"></div>
<div class="a" style="left:556px;top:843.4px;width:20px;height:20px;border-radius:10px;background:#fff;box-shadow:0 1px 2.5px rgba(0,0,0,0.38)"></div><svg class="a" style="left:554px;top:842.4px;" width="24" height="25" viewBox="0 0 24 25"><defs><clipPath id="f10"><circle cx="12" cy="11" r="10"/></clipPath></defs><g clip-path="url(#f10)"><rect x="0" y="0" width="24" height="8" fill="#3a6fbf"/><rect x="0" y="7.9" width="24" height="6.9" fill="#000"/><rect x="0" y="14.7" width="24" height="9" fill="#fff"/></g></svg>
<div class="a" style="left:613px;top:847px;width:14px;height:14px;border-radius:7px;background:#d2232a"></div>
<svg class="a" style="left:315px;top:887px;" width="17.4" height="17.4" viewBox="0 0 17.4 17.4"><circle cx="8.6" cy="8.6" r="8.6" fill="#428bca"/><path d="M3.6 6.5 L8.6 11.4 L13.6 6.5" fill="none" stroke="#fff" stroke-width="2.6"/></svg>
<div class="a" style="left:496px;top:884px;width:28px;height:26px;border-radius:2px;background:#f77b33"></div>
<div class="a" style="left:556px;top:886.4px;width:20px;height:20px;border-radius:10px;background:#fff;box-shadow:0 1px 2.5px rgba(0,0,0,0.38)"></div><svg class="a" style="left:554px;top:885.4px;" width="24" height="25" viewBox="0 0 24 25"><defs><clipPath id="f11"><circle cx="12" cy="11" r="10"/></clipPath></defs><g clip-path="url(#f11)"><rect x="0" y="0" width="24" height="6.2" fill="#c8242c"/><rect x="0" y="6" width="24" height="10" fill="#f8c41c"/><rect x="0" y="15.8" width="24" height="8" fill="#c8242c"/><rect x="5.7" y="7.4" width="4.6" height="1.6" rx="0.5" fill="#b8862a"/><rect x="5.5" y="8.6" width="5" height="5.6" rx="1.2" fill="#ad4a2c"/><rect x="6.6" y="9.8" width="2.8" height="3" fill="#d8a04a" opacity="0.8"/><rect x="4.2" y="8.6" width="1" height="5.6" fill="#c4ad7c"/><rect x="10.8" y="8.6" width="1" height="5.6" fill="#c4ad7c"/></g></svg>
<div class="a" style="left:613px;top:890px;width:14px;height:14px;border-radius:7px;background:#d2232a"></div>
<span class="t" style="top:14px;font-size:19px;line-height:25px;color:#000;font-weight:700;left:52.4px;transform-origin:0 50%;transform:scaleX(0.9423);-webkit-text-stroke:0.45px #000;">Bondora</span>
<span class="t" style="top:67px;font-size:15.76px;line-height:20px;color:#6c7a89;left:74.0px;transform-origin:0 50%;transform:scaleX(0.9434);">Dashboard</span>
<span class="t" style="top:117px;font-size:15.76px;line-height:20px;color:#6c7a89;left:74.0px;transform-origin:0 50%;transform:scaleX(0.9627);">Go &amp; Grow</span>
<span class="t" style="top:167px;font-size:15.76px;line-height:20px;color:#6c7a89;left:74.0px;transform-origin:0 50%;transform:scaleX(0.9462);">Kontoauszüge</span>
<span class="t" style="top:217px;font-size:15.76px;line-height:20px;color:#6c7a89;left:74.0px;transform-origin:0 50%;transform:scaleX(0.9731);">Freunde einladen</span>
<span class="t" style="top:267px;font-size:15.76px;line-height:20px;color:#6c7a89;left:74.0px;transform-origin:0 50%;transform:scaleX(0.9961);">Portfolio-Manager</span>
<span class="t" style="top:317px;font-size:15.76px;line-height:20px;color:#6c7a89;left:74.0px;transform-origin:0 50%;transform:scaleX(1.0156);">Statistik</span>
<span class="t" style="top:367px;font-size:15.76px;line-height:20px;color:#6c7a89;left:74.0px;transform-origin:0 50%;transform:scaleX(0.9524);">Cashflow</span>
<span class="t" style="top:417px;font-size:15.76px;line-height:20px;color:#6c7a89;left:74.0px;transform-origin:0 50%;transform:scaleX(0.9744);">Berichte</span>
<span class="t" style="top:467px;font-size:15.76px;line-height:20px;color:#6c7a89;left:74.0px;transform-origin:0 50%;transform:scaleX(0.9922);">Portfolio Pro</span>
<span class="t" style="top:517px;font-size:15.76px;line-height:20px;color:#fff;font-weight:700;left:74.0px;transform-origin:0 50%;transform:scaleX(0.9193);">Investitionen</span>
<span class="t" style="top:567px;font-size:15.76px;line-height:20px;color:#6c7a89;left:74.0px;transform-origin:0 50%;transform:scaleX(0.9615);">Sekundärmarkt</span>
<span class="t" style="top:617px;font-size:15.76px;line-height:20px;color:#6c7a89;left:74.0px;transform-origin:0 50%;transform:scaleX(0.9528);">Geld abheben</span>
<span class="t" style="top:679px;font-size:17.73px;line-height:23px;color:#fff;left:134.2px;transform:translateX(-50%) scaleX(0.9765);">Einzahlen</span>
<span class="t" style="top:849px;font-size:10.5px;line-height:14px;color:#2a2a2a;left:20.2px;transform-origin:0 50%;transform:scaleX(0.9623);-webkit-text-stroke:0.15px #2a2a2a;">Mo.–Fr.: 9–17 EET</span>
<span class="t" style="top:863px;font-size:10.5px;line-height:14px;color:#8ad737;left:20.2px;transform-origin:0 50%;transform:scaleX(1.0044);-webkit-text-stroke:0.15px #8ad737;">investor@bondora.com</span>
<span class="t" style="top:877px;font-size:10.5px;line-height:14px;color:#428bca;left:20.2px;transform-origin:0 50%;transform:scaleX(1.0098);-webkit-text-stroke:0.15px #428bca;">+44 1568 6300 06</span>
<span class="t" style="top:726px;font-size:17px;line-height:22px;color:#d3d3d3;font-weight:700;left:39.8px;transform-origin:0 50%;transform:scaleX(0.9865);-webkit-text-stroke:0.6px #d3d3d3;">Trustly</span>
<span class="t" style="top:723px;font-size:17.5px;line-height:23px;color:#d3d3d3;font-weight:700;font-style:italic;left:115.6px;transform-origin:0 50%;transform:scaleX(0.9790);-webkit-text-stroke:0.7px #d3d3d3;">VISA</span>
<span class="t" style="top:724px;font-size:18.5px;line-height:24px;color:#d3d3d3;font-weight:700;left:204.3px;transform-origin:0 50%;transform:scaleX(1.0518);-webkit-text-stroke:0.9px #d3d3d3;">S€PA</span>
<span class="t" style="top:757px;font-size:19px;line-height:25px;color:#d3d3d3;font-weight:700;left:47.4px;transform-origin:0 50%;transform:scaleX(0.9469);-webkit-text-stroke:0.6px #d3d3d3;">Klarna.</span>
<span class="t" style="top:764px;font-size:14.5px;line-height:19px;color:#d6d6d6;left:135.5px;transform-origin:0 50%;transform:scaleX(1.0097);">TransferWise</span>
<span class="t" style="top:27px;font-size:15.76px;line-height:20px;color:#6c7a89;left:853.8px;transform-origin:0 50%;transform:scaleX(0.9572);">Wunschliste</span>
<span class="t" style="top:27px;font-size:15.76px;line-height:20px;color:#6c7a89;left:973.2px;transform-origin:0 50%;transform:scaleX(0.9640);">Schneller Rundgang</span>
<span class="t" style="top:27px;font-size:15.76px;line-height:20px;color:#6c7a89;left:1149.3px;transform-origin:0 50%;transform:scaleX(0.9449);">Andere</span>
<span class="t" style="top:100px;font-size:17.73px;line-height:23px;color:#1a1a1a;left:301.6px;transform-origin:0 50%;transform:scaleX(0.9507);-webkit-text-stroke:0.2px #1a1a1a;">Verfügbares Guthaben:</span>
<span class="t" style="top:100px;font-size:17.73px;line-height:23px;color:#1a1a1a;font-weight:700;left:480.5px;transform-origin:0 50%;transform:scaleX(0.9946);-webkit-text-stroke:0.3px #1a1a1a;">0,44 €</span>
<span class="t" style="top:103px;font-size:15.76px;line-height:20px;color:#2a2a2a;left:577.0px;transform-origin:0 50%;transform:scaleX(0.9906);-webkit-text-stroke:0.15px #2a2a2a;">Durchschnittlicher Rabatt</span>
<span class="t" style="top:103px;font-size:14.28px;line-height:19px;color:#9a9a9a;left:843.3px;transform:translateX(-50%) scaleX(0.8828);">%</span>
<span class="t" style="top:95px;font-size:15.76px;line-height:20px;color:#222;left:950.8px;transform-origin:0 50%;transform:scaleX(0.9260);-webkit-text-stroke:0.15px #222;">Summe:</span>
<span class="t" style="top:95px;font-size:15.76px;line-height:20px;color:#222;font-weight:700;left:1009.7px;transform-origin:0 50%;transform:scaleX(0.9906);-webkit-text-stroke:0.3px #222;">0 €</span>
<span class="t" style="top:111px;font-size:15.76px;line-height:20px;color:#222;left:950.8px;transform-origin:0 50%;transform:scaleX(0.9368);-webkit-text-stroke:0.15px #222;">Gezahlte Gesamtsumme:</span>
<span class="t" style="top:112px;font-size:15.76px;line-height:20px;color:#222;font-weight:700;left:1123.0px;transform-origin:0 50%;transform:scaleX(0.9769);-webkit-text-stroke:0.3px #222;">0 €</span>
<span class="t" style="top:184px;font-size:15.76px;line-height:20px;color:#fff;left:310.5px;transform-origin:0 50%;transform:scaleX(0.9644);">Alles verkaufen (0 Darlehen)</span>
<span class="t" style="top:184px;font-size:15.76px;line-height:20px;color:#777;left:546.0px;transform-origin:0 50%;transform:scaleX(0.9529);">Verkauf abbrechen</span>
<span class="t" style="top:184px;font-size:15.76px;line-height:20px;color:#777;left:718.3px;transform-origin:0 50%;transform:scaleX(0.9519);">Wagen leeren</span>
<span class="t" style="top:265px;font-size:15.76px;line-height:20px;color:#fff;left:314.3px;transform-origin:0 50%;transform:scaleX(0.9810);">Fügen Sie Ihre vorhandenen Bondora-Investitionen dem Go &amp; Grow Portfolio hinzu</span>
<span class="t" style="top:329px;font-size:12.8px;line-height:17px;color:#fff;left:390.0px;transform:translateX(-50%) scaleX(1.0065);">Investition</span>
<span class="t" style="top:321px;font-size:12.8px;line-height:17px;color:#fff;left:510.0px;transform:translateX(-50%) scaleX(0.9515);">Bondora-</span>
<span class="t" style="top:336px;font-size:12.8px;line-height:17px;color:#fff;left:510.0px;transform:translateX(-50%) scaleX(0.9622);">Rating</span>
<span class="t" style="top:329px;font-size:12.8px;line-height:17px;color:#fff;left:569.0px;transform:translateX(-50%) scaleX(0.9273);">Land</span>
<span class="t" style="top:329px;font-size:12.8px;line-height:17px;color:#fff;left:620.0px;transform:translateX(-50%) scaleX(0.9537);">Status</span>
<span class="t" style="top:321px;font-size:12.8px;line-height:17px;color:#fff;left:691.0px;transform:translateX(-50%) scaleX(0.9565);">Datum des</span>
<span class="t" style="top:336px;font-size:12.8px;line-height:17px;color:#fff;left:691.0px;transform:translateX(-50%) scaleX(0.9523);">Erwerbs</span>
<span class="t" style="top:329px;font-size:12.8px;line-height:17px;color:#fff;left:768.0px;transform:translateX(-50%) scaleX(0.9682);">Zinsen</span>
<span class="t" style="top:314px;font-size:12.8px;line-height:17px;color:#fff;left:834.0px;transform:translateX(-50%) scaleX(0.9350);">Nächste</span>
<span class="t" style="top:329px;font-size:12.8px;line-height:17px;color:#fff;left:834.0px;transform:translateX(-50%) scaleX(0.9795);">Zahlung</span>
<span class="t" style="top:344px;font-size:12.8px;line-height:17px;color:#fff;left:834.0px;transform:translateX(-50%) scaleX(0.9352);">Nr.</span>
<span class="t" style="top:321px;font-size:12.8px;line-height:17px;color:#fff;left:915.0px;transform:translateX(-50%) scaleX(0.9419);">Ausstehendes</span>
<span class="t" style="top:336px;font-size:12.8px;line-height:17px;color:#fff;left:915.0px;transform:translateX(-50%) scaleX(0.9939);">Kapital</span>
<span class="t" style="top:329px;font-size:12.8px;line-height:17px;color:#fff;left:992.4px;transform:translateX(-50%) scaleX(1.0270);">Getilgt</span>
<span class="t" style="top:329px;font-size:12.8px;line-height:17px;color:#fff;left:1067.6px;transform:translateX(-50%) scaleX(0.9682);">Zinsen</span>
<span class="t" style="top:329px;font-size:12.8px;line-height:17px;color:#fff;left:1174.4px;transform:translateX(-50%) scaleX(0.9857);">Tilgungsrückstand</span>
<span class="t" style="top:321px;font-size:12.8px;line-height:17px;color:#fff;left:1288.4px;transform:translateX(-50%) scaleX(0.9613);">Aufgel.</span>
<span class="t" style="top:336px;font-size:12.8px;line-height:17px;color:#fff;left:1288.4px;transform:translateX(-50%) scaleX(0.9760);">Zinsen/-Strafen</span>
<span class="t" style="top:374px;font-size:13.79px;line-height:18px;color:#111;font-weight:700;left:315.3px;transform-origin:0 50%;transform:scaleX(0.8976);-webkit-text-stroke:0.35px #111;">Gesamt: 12</span>
<span class="t" style="top:374px;font-size:13.79px;line-height:18px;color:#111;font-weight:700;left:768.0px;transform:translateX(-50%) scaleX(0.9925);-webkit-text-stroke:0.35px #111;">28,28%</span>
<span class="t" style="top:374px;font-size:13.79px;line-height:18px;color:#111;font-weight:700;left:915.0px;transform:translateX(-50%) scaleX(1.0149);-webkit-text-stroke:0.35px #111;">5,55 €</span>
<span class="t" style="top:374px;font-size:13.79px;line-height:18px;color:#111;font-weight:700;left:992.0px;transform:translateX(-50%) scaleX(1.0149);-webkit-text-stroke:0.35px #111;">6,45 €</span>
<span class="t" style="top:374px;font-size:13.79px;line-height:18px;color:#111;font-weight:700;left:1067.6px;transform:translateX(-50%) scaleX(1.0149);-webkit-text-stroke:0.35px #111;">1,62 €</span>
<span class="t" style="top:374px;font-size:13.79px;line-height:18px;color:#111;font-weight:700;left:1174.4px;transform:translateX(-50%) scaleX(1.0149);-webkit-text-stroke:0.35px #111;">2,32 €</span>
<span class="t" style="top:374px;font-size:13.79px;line-height:18px;color:#111;font-weight:700;left:1288.4px;transform:translateX(-50%) scaleX(1.0275);-webkit-text-stroke:0.35px #111;">2 €</span>
<span class="t" style="top:931px;font-size:13.79px;line-height:18px;color:#111;font-weight:700;left:315.3px;transform-origin:0 50%;transform:scaleX(0.8976);-webkit-text-stroke:0.35px #111;">Gesamt: 12</span>
<span class="t" style="top:931px;font-size:13.79px;line-height:18px;color:#111;font-weight:700;left:768.0px;transform:translateX(-50%) scaleX(0.9925);-webkit-text-stroke:0.35px #111;">28,28%</span>
<span class="t" style="top:931px;font-size:13.79px;line-height:18px;color:#111;font-weight:700;left:915.0px;transform:translateX(-50%) scaleX(1.0149);-webkit-text-stroke:0.35px #111;">5,55 €</span>
<span class="t" style="top:931px;font-size:13.79px;line-height:18px;color:#111;font-weight:700;left:992.0px;transform:translateX(-50%) scaleX(1.0149);-webkit-text-stroke:0.35px #111;">6,45 €</span>
<span class="t" style="top:931px;font-size:13.79px;line-height:18px;color:#111;font-weight:700;left:1067.6px;transform:translateX(-50%) scaleX(1.0149);-webkit-text-stroke:0.35px #111;">1,62 €</span>
<span class="t" style="top:931px;font-size:13.79px;line-height:18px;color:#111;font-weight:700;left:1174.4px;transform:translateX(-50%) scaleX(1.0149);-webkit-text-stroke:0.35px #111;">2,32 €</span>
<span class="t" style="top:931px;font-size:13.79px;line-height:18px;color:#111;font-weight:700;left:1288.4px;transform:translateX(-50%) scaleX(1.0275);-webkit-text-stroke:0.35px #111;">2 €</span>
<span class="t" style="top:416px;font-size:13.79px;line-height:18px;color:#428bca;left:338.0px;transform-origin:0 50%;transform:scaleX(0.9952);-webkit-text-stroke:0.15px #428bca;">1104927-107987350</span>
<span class="t" style="top:415px;font-size:14px;line-height:18px;color:#fff;left:509.4px;transform:translateX(-50%) scaleX(0.9600);">C</span>
<span class="t" style="top:416px;font-size:13.79px;line-height:18px;color:#1c1c1c;left:691.0px;transform:translateX(-50%) scaleX(0.9480);-webkit-text-stroke:0.18px #1c1c1c;">30.05.2019</span>
<span class="t" style="top:416px;font-size:13.79px;line-height:18px;color:#1c1c1c;left:768.0px;transform:translateX(-50%) scaleX(0.9519);-webkit-text-stroke:0.18px #1c1c1c;">24,58%</span>
<span class="t" style="top:416px;font-size:13.79px;line-height:18px;color:#1c1c1c;left:834.0px;transform:translateX(-50%) scaleX(1.0193);-webkit-text-stroke:0.18px #1c1c1c;">0 / 12</span>
<span class="t" style="top:416px;font-size:13.79px;line-height:18px;color:#1c1c1c;left:915.0px;transform:translateX(-50%) scaleX(0.9797);-webkit-text-stroke:0.18px #1c1c1c;">0,72 €</span>
<span class="t" style="top:416px;font-size:13.79px;line-height:18px;color:#1c1c1c;left:992.0px;transform:translateX(-50%) scaleX(0.9797);-webkit-text-stroke:0.18px #1c1c1c;">0,28 €</span>
<span class="t" style="top:416px;font-size:13.79px;line-height:18px;color:#1c1c1c;left:1067.6px;transform:translateX(-50%) scaleX(0.9797);-webkit-text-stroke:0.18px #1c1c1c;">0,05 €</span>
<span class="t" style="top:416px;font-size:13.79px;line-height:18px;color:#1c1c1c;left:1174.4px;transform:translateX(-50%) scaleX(0.9797);-webkit-text-stroke:0.18px #1c1c1c;">0,27 €</span>
<span class="t" style="top:416px;font-size:13.79px;line-height:18px;color:#1c1c1c;left:1288.4px;transform:translateX(-50%) scaleX(0.9797);-webkit-text-stroke:0.18px #1c1c1c;">0,07 €</span>
<span class="t" style="top:432px;font-size:10.83px;line-height:14px;color:#72b838;left:1036.1px;transform-origin:0 50%;transform:scaleX(1.0530);-webkit-text-stroke:0.25px #72b838;">0,05 €</span>
<span class="t" style="top:431px;font-size:11.82px;line-height:15px;color:#223;left:1074.0px;transform:translateX(-50%) scaleX(1.0000);transform:translateX(-50%) skewX(-12deg);">/</span>
<span class="t" style="top:432px;font-size:10.83px;line-height:14px;color:#e9571f;left:1083.6px;transform-origin:0 50%;transform:scaleX(1.0357);-webkit-text-stroke:0.25px #e9571f;">0 €</span>
<span class="t" style="top:459px;font-size:13.79px;line-height:18px;color:#428bca;left:338.0px;transform-origin:0 50%;transform:scaleX(0.9872);-webkit-text-stroke:0.15px #428bca;">1056345-102718852</span>
<span class="t" style="top:458px;font-size:14px;line-height:18px;color:#fff;left:509.4px;transform:translateX(-50%) scaleX(0.9600);">A</span>
<span class="t" style="top:459px;font-size:13.79px;line-height:18px;color:#1c1c1c;left:691.0px;transform:translateX(-50%) scaleX(0.9480);-webkit-text-stroke:0.18px #1c1c1c;">13.04.2019</span>
<span class="t" style="top:459px;font-size:13.79px;line-height:18px;color:#1c1c1c;left:768.0px;transform:translateX(-50%) scaleX(0.9519);-webkit-text-stroke:0.18px #1c1c1c;">12,68%</span>
<span class="t" style="top:459px;font-size:13.79px;line-height:18px;color:#1c1c1c;left:834.0px;transform:translateX(-50%) scaleX(1.0193);-webkit-text-stroke:0.18px #1c1c1c;">8 / 12</span>
<span class="t" style="top:459px;font-size:13.79px;line-height:18px;color:#1c1c1c;left:915.0px;transform:translateX(-50%) scaleX(0.9797);-webkit-text-stroke:0.18px #1c1c1c;">0,43 €</span>
<span class="t" style="top:459px;font-size:13.79px;line-height:18px;color:#1c1c1c;left:992.0px;transform:translateX(-50%) scaleX(0.9797);-webkit-text-stroke:0.18px #1c1c1c;">0,57 €</span>
<span class="t" style="top:459px;font-size:13.79px;line-height:18px;color:#1c1c1c;left:1067.6px;transform:translateX(-50%) scaleX(0.9797);-webkit-text-stroke:0.18px #1c1c1c;">0,07 €</span>
<span class="t" style="top:459px;font-size:13.79px;line-height:18px;color:#1c1c1c;left:1174.4px;transform:translateX(-50%) scaleX(1.0093);-webkit-text-stroke:0.18px #1c1c1c;">0 €</span>
<span class="t" style="top:459px;font-size:13.79px;line-height:18px;color:#1c1c1c;left:1288.4px;transform:translateX(-50%) scaleX(1.0093);-webkit-text-stroke:0.18px #1c1c1c;">0 €</span>
<span class="t" style="top:475px;font-size:10.83px;line-height:14px;color:#72b838;left:1036.1px;transform-origin:0 50%;transform:scaleX(1.0530);-webkit-text-stroke:0.25px #72b838;">0,07 €</span>
<span class="t" style="top:474px;font-size:11.82px;line-height:15px;color:#223;left:1074.0px;transform:translateX(-50%) scaleX(1.0000);transform:translateX(-50%) skewX(-12deg);">/</span>
<span class="t" style="top:475px;font-size:10.83px;line-height:14px;color:#e9571f;left:1083.6px;transform-origin:0 50%;transform:scaleX(1.0357);-webkit-text-stroke:0.25px #e9571f;">0 €</span>
<span class="t" style="top:502px;font-size:13.79px;line-height:18px;color:#428bca;left:338.0px;transform-origin:0 50%;transform:scaleX(0.9872);-webkit-text-stroke:0.15px #428bca;">1048241-101089977</span>
<span class="t" style="top:501px;font-size:14px;line-height:18px;color:#fff;left:509.4px;transform:translateX(-50%) scaleX(0.9600);">C</span>
<span class="t" style="top:502px;font-size:13.79px;line-height:18px;color:#1c1c1c;left:691.0px;transform:translateX(-50%) scaleX(0.9480);-webkit-text-stroke:0.18px #1c1c1c;">02.04.2019</span>
<span class="t" style="top:502px;font-size:13.79px;line-height:18px;color:#1c1c1c;left:768.0px;transform:translateX(-50%) scaleX(0.9519);-webkit-text-stroke:0.18px #1c1c1c;">28,08%</span>
<span class="t" style="top:502px;font-size:13.79px;line-height:18px;color:#1c1c1c;left:834.0px;transform:translateX(-50%) scaleX(1.0193);-webkit-text-stroke:0.18px #1c1c1c;">9 / 12</span>
<span class="t" style="top:502px;font-size:13.79px;line-height:18px;color:#1c1c1c;left:915.0px;transform:translateX(-50%) scaleX(0.9797);-webkit-text-stroke:0.18px #1c1c1c;">0,45 €</span>
<span class="t" style="top:502px;font-size:13.79px;line-height:18px;color:#1c1c1c;left:992.0px;transform:translateX(-50%) scaleX(0.9797);-webkit-text-stroke:0.18px #1c1c1c;">0,55 €</span>
<span class="t" style="top:502px;font-size:13.79px;line-height:18px;color:#1c1c1c;left:1067.6px;transform:translateX(-50%) scaleX(0.9797);-webkit-text-stroke:0.18px #1c1c1c;">0,14 €</span>
<span class="t" style="top:502px;font-size:13.79px;line-height:18px;color:#1c1c1c;left:1174.4px;transform:translateX(-50%) scaleX(0.9797);-webkit-text-stroke:0.18px #1c1c1c;">0,09 €</span>
<span class="t" style="top:502px;font-size:13.79px;line-height:18px;color:#1c1c1c;left:1288.4px;transform:translateX(-50%) scaleX(0.9797);-webkit-text-stroke:0.18px #1c1c1c;">0,01 €</span>
<span class="t" style="top:518px;font-size:10.83px;line-height:14px;color:#72b838;left:1036.1px;transform-origin:0 50%;transform:scaleX(1.0530);-webkit-text-stroke:0.25px #72b838;">0,14 €</span>
<span class="t" style="top:517px;font-size:11.82px;line-height:15px;color:#223;left:1074.0px;transform:translateX(-50%) scaleX(1.0000);transform:translateX(-50%) skewX(-12deg);">/</span>
<span class="t" style="top:518px;font-size:10.83px;line-height:14px;color:#e9571f;left:1083.6px;transform-origin:0 50%;transform:scaleX(1.0357);-webkit-text-stroke:0.25px #e9571f;">0 €</span>
<span class="t" style="top:545px;font-size:13.79px;line-height:18px;color:#428bca;left:338.0px;transform-origin:0 50%;transform:scaleX(0.9882);-webkit-text-stroke:0.15px #428bca;">1034285-98870549</span>
<span class="t" style="top:544px;font-size:14px;line-height:18px;color:#fff;left:509.4px;transform:translateX(-50%) scaleX(0.9600);">C</span>
<span class="t" style="top:545px;font-size:13.79px;line-height:18px;color:#1c1c1c;left:691.0px;transform:translateX(-50%) scaleX(0.9480);-webkit-text-stroke:0.18px #1c1c1c;">16.03.2019</span>
<span class="t" style="top:545px;font-size:13.79px;line-height:18px;color:#1c1c1c;left:768.0px;transform:translateX(-50%) scaleX(0.9519);-webkit-text-stroke:0.18px #1c1c1c;">19,41%</span>
<span class="t" style="top:545px;font-size:13.79px;line-height:18px;color:#1c1c1c;left:834.0px;transform:translateX(-50%) scaleX(1.0325);-webkit-text-stroke:0.18px #1c1c1c;">3 / 6</span>
<span class="t" style="top:545px;font-size:13.79px;line-height:18px;color:#1c1c1c;left:915.0px;transform:translateX(-50%) scaleX(0.9797);-webkit-text-stroke:0.18px #1c1c1c;">0,35 €</span>
<span class="t" style="top:545px;font-size:13.79px;line-height:18px;color:#1c1c1c;left:992.0px;transform:translateX(-50%) scaleX(0.9797);-webkit-text-stroke:0.18px #1c1c1c;">0,65 €</span>
<span class="t" style="top:545px;font-size:13.79px;line-height:18px;color:#1c1c1c;left:1067.6px;transform:translateX(-50%) scaleX(1.0068);-webkit-text-stroke:0.18px #1c1c1c;">0,11 €</span>
<span class="t" style="top:545px;font-size:13.79px;line-height:18px;color:#1c1c1c;left:1174.4px;transform:translateX(-50%) scaleX(1.0093);-webkit-text-stroke:0.18px #1c1c1c;">0 €</span>
<span class="t" style="top:545px;font-size:13.79px;line-height:18px;color:#1c1c1c;left:1288.4px;transform:translateX(-50%) scaleX(1.0093);-webkit-text-stroke:0.18px #1c1c1c;">0 €</span>
<span class="t" style="top:561px;font-size:10.83px;line-height:14px;color:#72b838;left:1036.1px;transform-origin:0 50%;transform:scaleX(1.0816);-webkit-text-stroke:0.25px #72b838;">0,11 €</span>
<span class="t" style="top:560px;font-size:11.82px;line-height:15px;color:#223;left:1074.0px;transform:translateX(-50%) scaleX(1.0000);transform:translateX(-50%) skewX(-12deg);">/</span>
<span class="t" style="top:561px;font-size:10.83px;line-height:14px;color:#e9571f;left:1083.6px;transform-origin:0 50%;transform:scaleX(1.0357);-webkit-text-stroke:0.25px #e9571f;">0 €</span>
<span class="t" style="top:588px;font-size:13.79px;line-height:18px;color:#428bca;left:338.0px;transform-origin:0 50%;transform:scaleX(0.9882);-webkit-text-stroke:0.15px #428bca;">1024461-96577820</span>
<span class="t" style="top:587px;font-size:14px;line-height:18px;color:#fff;left:509.4px;transform:translateX(-50%) scaleX(0.9600);">C</span>
<span class="t" style="top:588px;font-size:13.79px;line-height:18px;color:#1c1c1c;left:691.0px;transform:translateX(-50%) scaleX(0.9480);-webkit-text-stroke:0.18px #1c1c1c;">03.03.2019</span>
<span class="t" style="top:588px;font-size:13.79px;line-height:18px;color:#1c1c1c;left:768.0px;transform:translateX(-50%) scaleX(0.9519);-webkit-text-stroke:0.18px #1c1c1c;">24,58%</span>
<span class="t" style="top:588px;font-size:13.79px;line-height:18px;color:#1c1c1c;left:834.0px;transform:translateX(-50%) scaleX(1.0193);-webkit-text-stroke:0.18px #1c1c1c;">0 / 24</span>
<span class="t" style="top:588px;font-size:13.79px;line-height:18px;color:#1c1c1c;left:915.0px;transform:translateX(-50%) scaleX(0.9819);-webkit-text-stroke:0.18px #1c1c1c;">0,8 €</span>
<span class="t" style="top:588px;font-size:13.79px;line-height:18px;color:#1c1c1c;left:992.0px;transform:translateX(-50%) scaleX(0.9819);-webkit-text-stroke:0.18px #1c1c1c;">0,2 €</span>
<span class="t" style="top:588px;font-size:13.79px;line-height:18px;color:#1c1c1c;left:1067.6px;transform:translateX(-50%) scaleX(0.9797);-webkit-text-stroke:0.18px #1c1c1c;">0,08 €</span>
<span class="t" style="top:588px;font-size:13.79px;line-height:18px;color:#1c1c1c;left:1174.4px;transform:translateX(-50%) scaleX(0.9797);-webkit-text-stroke:0.18px #1c1c1c;">0,14 €</span>
<span class="t" style="top:588px;font-size:13.79px;line-height:18px;color:#1c1c1c;left:1288.4px;transform:translateX(-50%) scaleX(0.9797);-webkit-text-stroke:0.18px #1c1c1c;">0,09 €</span>
<span class="t" style="top:604px;font-size:10.83px;line-height:14px;color:#72b838;left:1036.1px;transform-origin:0 50%;transform:scaleX(1.0530);-webkit-text-stroke:0.25px #72b838;">0,08 €</span>
<span class="t" style="top:603px;font-size:11.82px;line-height:15px;color:#223;left:1074.0px;transform:translateX(-50%) scaleX(1.0000);transform:translateX(-50%) skewX(-12deg);">/</span>
<span class="t" style="top:604px;font-size:10.83px;line-height:14px;color:#e9571f;left:1083.6px;transform-origin:0 50%;transform:scaleX(1.0357);-webkit-text-stroke:0.25px #e9571f;">0 €</span>
<span class="t" style="top:631px;font-size:13.79px;line-height:18px;color:#428bca;left:338.0px;transform-origin:0 50%;transform:scaleX(0.9882);-webkit-text-stroke:0.15px #428bca;">1003840-91679469</span>
<span class="t" style="top:630px;font-size:14px;line-height:18px;color:#fff;left:509.4px;transform:translateX(-50%) scaleX(0.9600);">A</span>
<span class="t" style="top:631px;font-size:13.79px;line-height:18px;color:#1c1c1c;left:691.0px;transform:translateX(-50%) scaleX(0.9480);-webkit-text-stroke:0.18px #1c1c1c;">30.01.2019</span>
<span class="t" style="top:631px;font-size:13.79px;line-height:18px;color:#1c1c1c;left:768.0px;transform:translateX(-50%) scaleX(0.9519);-webkit-text-stroke:0.18px #1c1c1c;">12,35%</span>
<span class="t" style="top:631px;font-size:13.79px;line-height:18px;color:#1c1c1c;left:834.0px;transform:translateX(-50%) scaleX(1.0359);-webkit-text-stroke:0.18px #1c1c1c;">11 / 12</span>
<span class="t" style="top:631px;font-size:13.79px;line-height:18px;color:#1c1c1c;left:915.0px;transform:translateX(-50%) scaleX(0.9797);-webkit-text-stroke:0.18px #1c1c1c;">0,26 €</span>
<span class="t" style="top:631px;font-size:13.79px;line-height:18px;color:#1c1c1c;left:992.0px;transform:translateX(-50%) scaleX(0.9797);-webkit-text-stroke:0.18px #1c1c1c;">0,74 €</span>
<span class="t" style="top:631px;font-size:13.79px;line-height:18px;color:#1c1c1c;left:1067.6px;transform:translateX(-50%) scaleX(0.9797);-webkit-text-stroke:0.18px #1c1c1c;">0,07 €</span>
<span class="t" style="top:631px;font-size:13.79px;line-height:18px;color:#1c1c1c;left:1174.4px;transform:translateX(-50%) scaleX(0.9797);-webkit-text-stroke:0.18px #1c1c1c;">0,09 €</span>
<span class="t" style="top:631px;font-size:13.79px;line-height:18px;color:#1c1c1c;left:1288.4px;transform:translateX(-50%) scaleX(1.0093);-webkit-text-stroke:0.18px #1c1c1c;">0 €</span>
<span class="t" style="top:647px;font-size:10.83px;line-height:14px;color:#72b838;left:1036.1px;transform-origin:0 50%;transform:scaleX(1.0530);-webkit-text-stroke:0.25px #72b838;">0,07 €</span>
<span class="t" style="top:646px;font-size:11.82px;line-height:15px;color:#223;left:1074.0px;transform:translateX(-50%) scaleX(1.0000);transform:translateX(-50%) skewX(-12deg);">/</span>
<span class="t" style="top:647px;font-size:10.83px;line-height:14px;color:#e9571f;left:1083.6px;transform-origin:0 50%;transform:scaleX(1.0357);-webkit-text-stroke:0.25px #e9571f;">0 €</span>
<span class="t" style="top:674px;font-size:13.79px;line-height:18px;color:#428bca;left:338.0px;transform-origin:0 50%;transform:scaleX(0.9892);-webkit-text-stroke:0.15px #428bca;">975457-86964631</span>
<span class="t" style="top:673px;font-size:14px;line-height:18px;color:#fff;left:509.4px;transform:translateX(-50%) scaleX(0.9600);">C</span>
<span class="t" style="top:674px;font-size:13.79px;line-height:18px;color:#1c1c1c;left:691.0px;transform:translateX(-50%) scaleX(0.9480);-webkit-text-stroke:0.18px #1c1c1c;">21.12.2018</span>
<span class="t" style="top:674px;font-size:13.79px;line-height:18px;color:#1c1c1c;left:768.0px;transform:translateX(-50%) scaleX(0.9519);-webkit-text-stroke:0.18px #1c1c1c;">26,78%</span>
<span class="t" style="top:674px;font-size:13.79px;line-height:18px;color:#1c1c1c;left:834.0px;transform:translateX(-50%) scaleX(1.0105);-webkit-text-stroke:0.18px #1c1c1c;">12 / 12</span>
<span class="t" style="top:674px;font-size:13.79px;line-height:18px;color:#1c1c1c;left:915.0px;transform:translateX(-50%) scaleX(0.9797);-webkit-text-stroke:0.18px #1c1c1c;">0,18 €</span>
<span class="t" style="top:674px;font-size:13.79px;line-height:18px;color:#1c1c1c;left:992.0px;transform:translateX(-50%) scaleX(0.9797);-webkit-text-stroke:0.18px #1c1c1c;">0,82 €</span>
<span class="t" style="top:674px;font-size:13.79px;line-height:18px;color:#1c1c1c;left:1067.6px;transform:translateX(-50%) scaleX(0.9797);-webkit-text-stroke:0.18px #1c1c1c;">0,17 €</span>
<span class="t" style="top:674px;font-size:13.79px;line-height:18px;color:#1c1c1c;left:1174.4px;transform:translateX(-50%) scaleX(0.9797);-webkit-text-stroke:0.18px #1c1c1c;">0,09 €</span>
<span class="t" style="top:674px;font-size:13.79px;line-height:18px;color:#1c1c1c;left:1288.4px;transform:translateX(-50%) scaleX(1.0093);-webkit-text-stroke:0.18px #1c1c1c;">0 €</span>
<span class="t" style="top:690px;font-size:10.83px;line-height:14px;color:#72b838;left:1036.1px;transform-origin:0 50%;transform:scaleX(1.0530);-webkit-text-stroke:0.25px #72b838;">0,17 €</span>
<span class="t" style="top:689px;font-size:11.82px;line-height:15px;color:#223;left:1074.0px;transform:translateX(-50%) scaleX(1.0000);transform:translateX(-50%) skewX(-12deg);">/</span>
<span class="t" style="top:690px;font-size:10.83px;line-height:14px;color:#e9571f;left:1083.6px;transform-origin:0 50%;transform:scaleX(1.0357);-webkit-text-stroke:0.25px #e9571f;">0 €</span>
<span class="t" style="top:717px;font-size:13.79px;line-height:18px;color:#428bca;left:338.0px;transform-origin:0 50%;transform:scaleX(0.9892);-webkit-text-stroke:0.15px #428bca;">961764-84657040</span>
<span class="t" style="top:716px;font-size:14px;line-height:18px;color:#fff;left:509.4px;transform:translateX(-50%) scaleX(0.9600);">C</span>
<span class="t" style="top:717px;font-size:13.79px;line-height:18px;color:#1c1c1c;left:691.0px;transform:translateX(-50%) scaleX(0.9480);-webkit-text-stroke:0.18px #1c1c1c;">04.12.2018</span>
<span class="t" style="top:717px;font-size:13.79px;line-height:18px;color:#1c1c1c;left:768.0px;transform:translateX(-50%) scaleX(0.9519);-webkit-text-stroke:0.18px #1c1c1c;">22,18%</span>
<span class="t" style="top:717px;font-size:13.79px;line-height:18px;color:#1c1c1c;left:834.0px;transform:translateX(-50%) scaleX(1.0193);-webkit-text-stroke:0.18px #1c1c1c;">0 / 12</span>
<span class="t" style="top:717px;font-size:13.79px;line-height:18px;color:#1c1c1c;left:915.0px;transform:translateX(-50%) scaleX(0.9797);-webkit-text-stroke:0.18px #1c1c1c;">0,13 €</span>
<span class="t" style="top:717px;font-size:13.79px;line-height:18px;color:#1c1c1c;left:992.0px;transform:translateX(-50%) scaleX(0.9797);-webkit-text-stroke:0.18px #1c1c1c;">0,87 €</span>
<span class="t" style="top:717px;font-size:13.79px;line-height:18px;color:#1c1c1c;left:1067.6px;transform:translateX(-50%) scaleX(0.9797);-webkit-text-stroke:0.18px #1c1c1c;">0,13 €</span>
<span class="t" style="top:717px;font-size:13.79px;line-height:18px;color:#1c1c1c;left:1174.4px;transform:translateX(-50%) scaleX(0.9797);-webkit-text-stroke:0.18px #1c1c1c;">0,13 €</span>
<span class="t" style="top:717px;font-size:13.79px;line-height:18px;color:#1c1c1c;left:1288.4px;transform:translateX(-50%) scaleX(1.0093);-webkit-text-stroke:0.18px #1c1c1c;">0 €</span>
<span class="t" style="top:733px;font-size:10.83px;line-height:14px;color:#72b838;left:1036.1px;transform-origin:0 50%;transform:scaleX(1.0530);-webkit-text-stroke:0.25px #72b838;">0,13 €</span>
<span class="t" style="top:732px;font-size:11.82px;line-height:15px;color:#223;left:1074.0px;transform:translateX(-50%) scaleX(1.0000);transform:translateX(-50%) skewX(-12deg);">/</span>
<span class="t" style="top:733px;font-size:10.83px;line-height:14px;color:#e9571f;left:1083.6px;transform-origin:0 50%;transform:scaleX(1.0357);-webkit-text-stroke:0.25px #e9571f;">0 €</span>
<span class="t" style="top:760px;font-size:13.79px;line-height:18px;color:#428bca;left:338.0px;transform-origin:0 50%;transform:scaleX(0.9892);-webkit-text-stroke:0.15px #428bca;">947282-83179904</span>
<span class="t" style="top:759px;font-size:14px;line-height:18px;color:#fff;left:509.4px;transform:translateX(-50%) scaleX(0.9600);">B</span>
<span class="t" style="top:760px;font-size:13.79px;line-height:18px;color:#1c1c1c;left:691.0px;transform:translateX(-50%) scaleX(0.9624);-webkit-text-stroke:0.18px #1c1c1c;">18.11.2018</span>
<span class="t" style="top:760px;font-size:13.79px;line-height:18px;color:#1c1c1c;left:768.0px;transform:translateX(-50%) scaleX(0.9519);-webkit-text-stroke:0.18px #1c1c1c;">16,89%</span>
<span class="t" style="top:760px;font-size:13.79px;line-height:18px;color:#1c1c1c;left:834.0px;transform:translateX(-50%) scaleX(1.0193);-webkit-text-stroke:0.18px #1c1c1c;">0 / 12</span>
<span class="t" style="top:760px;font-size:13.79px;line-height:18px;color:#1c1c1c;left:915.0px;transform:translateX(-50%) scaleX(0.9819);-webkit-text-stroke:0.18px #1c1c1c;">0,6 €</span>
<span class="t" style="top:760px;font-size:13.79px;line-height:18px;color:#1c1c1c;left:992.0px;transform:translateX(-50%) scaleX(0.9819);-webkit-text-stroke:0.18px #1c1c1c;">0,4 €</span>
<span class="t" style="top:760px;font-size:13.79px;line-height:18px;color:#1c1c1c;left:1067.6px;transform:translateX(-50%) scaleX(0.9797);-webkit-text-stroke:0.18px #1c1c1c;">0,07 €</span>
<span class="t" style="top:760px;font-size:13.79px;line-height:18px;color:#1c1c1c;left:1174.4px;transform:translateX(-50%) scaleX(0.9819);-webkit-text-stroke:0.18px #1c1c1c;">0,6 €</span>
<span class="t" style="top:760px;font-size:13.79px;line-height:18px;color:#1c1c1c;left:1288.4px;transform:translateX(-50%) scaleX(0.9797);-webkit-text-stroke:0.18px #1c1c1c;">0,06 €</span>
<span class="t" style="top:776px;font-size:10.83px;line-height:14px;color:#72b838;left:1036.1px;transform-origin:0 50%;transform:scaleX(1.0530);-webkit-text-stroke:0.25px #72b838;">0,07 €</span>
<span class="t" style="top:775px;font-size:11.82px;line-height:15px;color:#223;left:1074.0px;transform:translateX(-50%) scaleX(1.0000);transform:translateX(-50%) skewX(-12deg);">/</span>
<span class="t" style="top:776px;font-size:10.83px;line-height:14px;color:#e9571f;left:1083.6px;transform-origin:0 50%;transform:scaleX(1.0357);-webkit-text-stroke:0.25px #e9571f;">0 €</span>
<span class="t" style="top:803px;font-size:13.79px;line-height:18px;color:#428bca;left:338.0px;transform-origin:0 50%;transform:scaleX(0.9892);-webkit-text-stroke:0.15px #428bca;">933274-80899750</span>
<span class="t" style="top:802px;font-size:14px;line-height:18px;color:#fff;left:509.4px;transform:translateX(-50%) scaleX(0.9600);">C</span>
<span class="t" style="top:803px;font-size:13.79px;line-height:18px;color:#1c1c1c;left:691.0px;transform:translateX(-50%) scaleX(0.9480);-webkit-text-stroke:0.18px #1c1c1c;">31.10.2018</span>
<span class="t" style="top:803px;font-size:13.79px;line-height:18px;color:#1c1c1c;left:768.0px;transform:translateX(-50%) scaleX(0.9519);-webkit-text-stroke:0.18px #1c1c1c;">26,64%</span>
<span class="t" style="top:803px;font-size:13.79px;line-height:18px;color:#1c1c1c;left:834.0px;transform:translateX(-50%) scaleX(1.0193);-webkit-text-stroke:0.18px #1c1c1c;">0 / 12</span>
<span class="t" style="top:803px;font-size:13.79px;line-height:18px;color:#1c1c1c;left:915.0px;transform:translateX(-50%) scaleX(0.9797);-webkit-text-stroke:0.18px #1c1c1c;">0,24 €</span>
<span class="t" style="top:803px;font-size:13.79px;line-height:18px;color:#1c1c1c;left:992.0px;transform:translateX(-50%) scaleX(0.9797);-webkit-text-stroke:0.18px #1c1c1c;">0,76 €</span>
<span class="t" style="top:803px;font-size:13.79px;line-height:18px;color:#1c1c1c;left:1067.6px;transform:translateX(-50%) scaleX(0.9797);-webkit-text-stroke:0.18px #1c1c1c;">0,15 €</span>
<span class="t" style="top:803px;font-size:13.79px;line-height:18px;color:#1c1c1c;left:1174.4px;transform:translateX(-50%) scaleX(0.9797);-webkit-text-stroke:0.18px #1c1c1c;">0,24 €</span>
<span class="t" style="top:803px;font-size:13.79px;line-height:18px;color:#1c1c1c;left:1288.4px;transform:translateX(-50%) scaleX(0.9797);-webkit-text-stroke:0.18px #1c1c1c;">0,03 €</span>
<span class="t" style="top:819px;font-size:10.83px;line-height:14px;color:#72b838;left:1036.1px;transform-origin:0 50%;transform:scaleX(1.0530);-webkit-text-stroke:0.25px #72b838;">0,15 €</span>
<span class="t" style="top:818px;font-size:11.82px;line-height:15px;color:#223;left:1074.0px;transform:translateX(-50%) scaleX(1.0000);transform:translateX(-50%) skewX(-12deg);">/</span>
<span class="t" style="top:819px;font-size:10.83px;line-height:14px;color:#e9571f;left:1083.6px;transform-origin:0 50%;transform:scaleX(1.0357);-webkit-text-stroke:0.25px #e9571f;">0 €</span>
<span class="t" style="top:846px;font-size:13.79px;line-height:18px;color:#428bca;left:338.0px;transform-origin:0 50%;transform:scaleX(0.9892);-webkit-text-stroke:0.15px #428bca;">750561-51489501</span>
<span class="t" style="top:845px;font-size:14px;line-height:18px;color:#fff;left:509.4px;transform:translateX(-50%) scaleX(0.9600);">B</span>
<span class="t" style="top:846px;font-size:13.79px;line-height:18px;color:#1c1c1c;left:691.0px;transform:translateX(-50%) scaleX(0.9480);-webkit-text-stroke:0.18px #1c1c1c;">30.12.2017</span>
<span class="t" style="top:846px;font-size:13.79px;line-height:18px;color:#1c1c1c;left:768.0px;transform:translateX(-50%) scaleX(0.9519);-webkit-text-stroke:0.18px #1c1c1c;">17,85%</span>
<span class="t" style="top:846px;font-size:13.79px;line-height:18px;color:#1c1c1c;left:834.0px;transform:translateX(-50%) scaleX(1.0193);-webkit-text-stroke:0.18px #1c1c1c;">0 / 18</span>
<span class="t" style="top:846px;font-size:13.79px;line-height:18px;color:#1c1c1c;left:915.0px;transform:translateX(-50%) scaleX(0.9819);-webkit-text-stroke:0.18px #1c1c1c;">0,4 €</span>
<span class="t" style="top:846px;font-size:13.79px;line-height:18px;color:#1c1c1c;left:992.0px;transform:translateX(-50%) scaleX(0.9819);-webkit-text-stroke:0.18px #1c1c1c;">0,6 €</span>
<span class="t" style="top:846px;font-size:13.79px;line-height:18px;color:#1c1c1c;left:1067.6px;transform:translateX(-50%) scaleX(0.9819);-webkit-text-stroke:0.18px #1c1c1c;">0,1 €</span>
<span class="t" style="top:846px;font-size:13.79px;line-height:18px;color:#1c1c1c;left:1174.4px;transform:translateX(-50%) scaleX(0.9819);-webkit-text-stroke:0.18px #1c1c1c;">0,4 €</span>
<span class="t" style="top:846px;font-size:13.79px;line-height:18px;color:#1c1c1c;left:1288.4px;transform:translateX(-50%) scaleX(0.9797);-webkit-text-stroke:0.18px #1c1c1c;">0,08 €</span>
<span class="t" style="top:862px;font-size:10.83px;line-height:14px;color:#72b838;left:1039.2px;transform-origin:0 50%;transform:scaleX(1.0548);-webkit-text-stroke:0.25px #72b838;">0,1 €</span>
<span class="t" style="top:861px;font-size:11.82px;line-height:15px;color:#223;left:1070.9px;transform:translateX(-50%) scaleX(1.0000);transform:translateX(-50%) skewX(-12deg);">/</span>
<span class="t" style="top:862px;font-size:10.83px;line-height:14px;color:#e9571f;left:1080.5px;transform-origin:0 50%;transform:scaleX(1.0357);-webkit-text-stroke:0.25px #e9571f;">0 €</span>
<span class="t" style="top:889px;font-size:13.79px;line-height:18px;color:#428bca;left:338.0px;transform-origin:0 50%;transform:scaleX(0.9892);-webkit-text-stroke:0.15px #428bca;">749302-51061058</span>
<span class="t" style="top:888px;font-size:14px;line-height:18px;color:#fff;left:509.4px;transform:translateX(-50%) scaleX(0.9600);">HR</span>
<span class="t" style="top:889px;font-size:13.79px;line-height:18px;color:#1c1c1c;left:691.0px;transform:translateX(-50%) scaleX(0.9480);-webkit-text-stroke:0.18px #1c1c1c;">22.12.2017</span>
<span class="t" style="top:889px;font-size:13.79px;line-height:18px;color:#1c1c1c;left:768.0px;transform:translateX(-50%) scaleX(0.9519);-webkit-text-stroke:0.18px #1c1c1c;">107,3%</span>
<span class="t" style="top:889px;font-size:13.79px;line-height:18px;color:#1c1c1c;left:834.0px;transform:translateX(-50%) scaleX(1.0193);-webkit-text-stroke:0.18px #1c1c1c;">0 / 36</span>
<span class="t" style="top:889px;font-size:13.79px;line-height:18px;color:#1c1c1c;left:915.0px;transform:translateX(-50%) scaleX(0.9797);-webkit-text-stroke:0.18px #1c1c1c;">0,97 €</span>
<span class="t" style="top:889px;font-size:13.79px;line-height:18px;color:#1c1c1c;left:992.0px;transform:translateX(-50%) scaleX(0.9797);-webkit-text-stroke:0.18px #1c1c1c;">0,03 €</span>
<span class="t" style="top:889px;font-size:13.79px;line-height:18px;color:#1c1c1c;left:1067.6px;transform:translateX(-50%) scaleX(0.9797);-webkit-text-stroke:0.18px #1c1c1c;">0,48 €</span>
<span class="t" style="top:889px;font-size:13.79px;line-height:18px;color:#1c1c1c;left:1174.4px;transform:translateX(-50%) scaleX(0.9797);-webkit-text-stroke:0.18px #1c1c1c;">0,28 €</span>
<span class="t" style="top:889px;font-size:13.79px;line-height:18px;color:#1c1c1c;left:1288.4px;transform:translateX(-50%) scaleX(0.9797);-webkit-text-stroke:0.18px #1c1c1c;">1,64 €</span>
<span class="t" style="top:905px;font-size:10.83px;line-height:14px;color:#72b838;left:1036.1px;transform-origin:0 50%;transform:scaleX(1.0530);-webkit-text-stroke:0.25px #72b838;">0,48 €</span>
<span class="t" style="top:904px;font-size:11.82px;line-height:15px;color:#223;left:1074.0px;transform:translateX(-50%) scaleX(1.0000);transform:translateX(-50%) skewX(-12deg);">/</span>
<span class="t" style="top:905px;font-size:10.83px;line-height:14px;color:#e9571f;left:1083.6px;transform-origin:0 50%;transform:scaleX(1.0357);-webkit-text-stroke:0.25px #e9571f;">0 €</span>
</body></html>
